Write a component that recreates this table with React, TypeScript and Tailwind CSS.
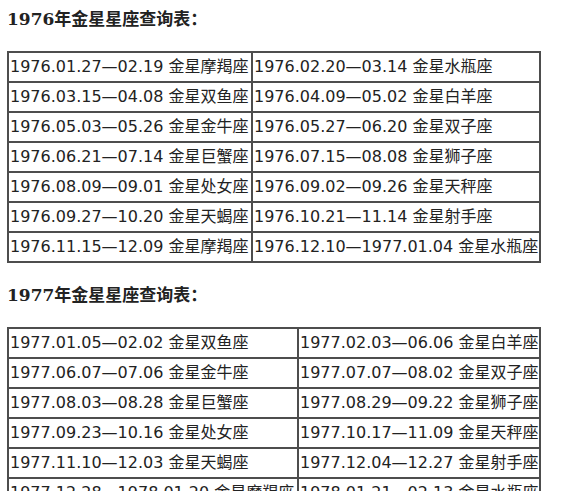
const TABLE_1976: [string, string][] = [
  ["1976.01.27—02.19 金星摩羯座", "1976.02.20—03.14 金星水瓶座"],
  ["1976.03.15—04.08 金星双鱼座", "1976.04.09—05.02 金星白羊座"],
  ["1976.05.03—05.26 金星金牛座", "1976.05.27—06.20 金星双子座"],
  ["1976.06.21—07.14 金星巨蟹座", "1976.07.15—08.08 金星狮子座"],
  ["1976.08.09—09.01 金星处女座", "1976.09.02—09.26 金星天秤座"],
  ["1976.09.27—10.20 金星天蝎座", "1976.10.21—11.14 金星射手座"],
  ["1976.11.15—12.09 金星摩羯座", "1976.12.10—1977.01.04 金星水瓶座"],
];

const TABLE_1977: [string, string][] = [
  ["1977.01.05—02.02 金星双鱼座", "1977.02.03—06.06 金星白羊座"],
  ["1977.06.07—07.06 金星金牛座", "1977.07.07—08.02 金星双子座"],
  ["1977.08.03—08.28 金星巨蟹座", "1977.08.29—09.22 金星狮子座"],
  ["1977.09.23—10.16 金星处女座", "1977.10.17—11.09 金星天秤座"],
  ["1977.11.10—12.03 金星天蝎座", "1977.12.04—12.27 金星射手座"],
  ["1977.12.28—1978.01.20 金星摩羯座", "1978.01.21—02.13 金星水瓶座"],
];

const cellFont = {
  fontFamily: '"DejaVu Sans", "Noto Sans CJK SC", sans-serif',
};

function Heading({ children }: { children: React.ReactNode }) {
  return (
    <h2
      className="text-[17px] leading-[28px] font-bold text-[#222]"
      style={{ fontFamily: '"DejaVu Serif", "Noto Sans CJK SC", serif' }}
    >
      {children}
    </h2>
  );
}

function VenusTable({ rows, firstCol }: { rows: [string, string][]; firstCol: "narrow" | "wide" }) {
  return (
    <table
      className="w-[534px] table-fixed border-separate border-spacing-0 border border-[#4d4d4d] text-[16px] text-[#222]"
      style={cellFont}
    >
      <colgroup>
        <col className={firstCol === "narrow" ? "w-[244px]" : "w-[290px]"} />
        <col />
      </colgroup>
      <tbody>
        {rows.map(([a, b]) => (
          <tr key={a}>
            <td className="border border-[#4d4d4d] p-0 pl-[1px] leading-[28px] whitespace-nowrap overflow-hidden">
              {a}
            </td>
            <td className="border border-[#4d4d4d] p-0 pl-[1px] leading-[28px] whitespace-nowrap overflow-hidden">
              {b}
            </td>
          </tr>
        ))}
      </tbody>
    </table>
  );
}

export default function App() {
  return (
    <div className="min-h-screen bg-white px-[7px] pt-[5px]">
      <Heading>1976年金星星座查询表：</Heading>
      <div className="mt-[18px]">
        <VenusTable rows={TABLE_1976} firstCol="narrow" />
      </div>
      <div className="mt-[18px]">
        <Heading>1977年金星星座查询表：</Heading>
      </div>
      <div className="mt-[18px]">
        <VenusTable rows={TABLE_1977} firstCol="wide" />
      </div>
    </div>
  );
}
